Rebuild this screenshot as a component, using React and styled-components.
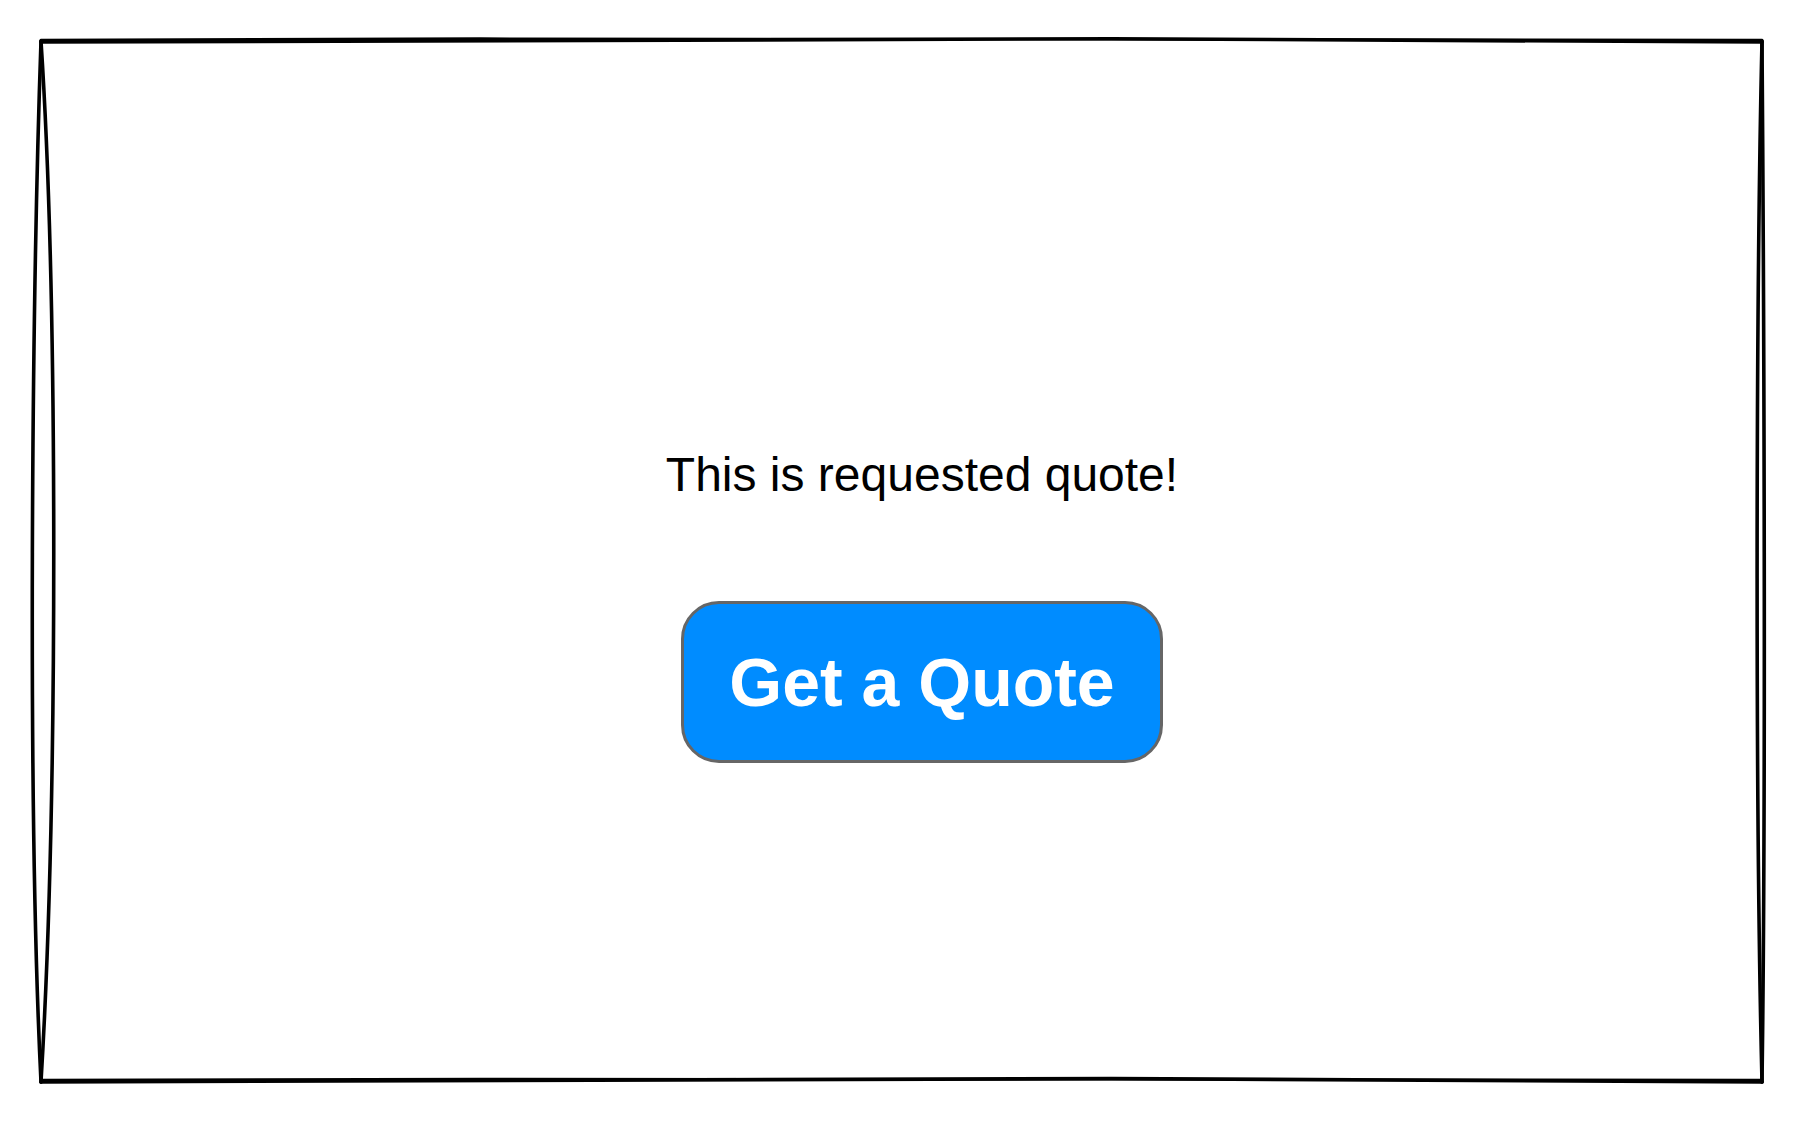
import React from "react";
import styled, { createGlobalStyle } from "styled-components";

const GlobalStyle = createGlobalStyle`
  html, body {
    margin: 0;
    padding: 0;
    background: #ffffff;
  }
  body {
    font-family: "Liberation Sans", Arial, Helvetica, sans-serif;
    color: #000000;
  }
`;

const Page = styled.div`
  position: relative;
  width: 1804px;
  height: 1124px;
  overflow: hidden;
  background: #ffffff;
`;

const SketchFrame = styled.svg`
  position: absolute;
  inset: 0;
  width: 100%;
  height: 100%;
  pointer-events: none;
`;

const Stage = styled.main`
  display: flex;
  flex-direction: column;
  align-items: center;
  padding-top: 447px;
  padding-left: 40px;
  gap: 98px;
`;

const Message = styled.p`
  margin: 0;
  font-family: "Liberation Sans", Arial, Helvetica, sans-serif;
  font-size: 48px;
  line-height: 56px;
  color: #000000;
`;

const QuoteButton = styled.button`
  display: flex;
  align-items: center;
  justify-content: center;
  box-sizing: border-box;
  width: 482px;
  height: 162px;
  padding: 0;
  border: 3px solid #666666;
  border-radius: 38px;
  background: #008cff;
  color: #ffffff;
  font-family: "Liberation Sans", Arial, Helvetica, sans-serif;
  font-weight: 700;
  font-size: 68px;
  line-height: 1;
  cursor: pointer;
`;

function Frame() {
  return (
    <SketchFrame viewBox="0 0 1804 1124" aria-hidden="true">
      <g fill="none" stroke="#000" strokeWidth="3.6" strokeLinecap="round" strokeLinejoin="round">
        {/* top */}
        <path d="M41 42 C 500 38, 1200 37, 1762 42" />
        <path d="M41 40 C 600 37, 1100 39, 1762 40" strokeWidth="2.4" />
        {/* bottom */}
        <path d="M41 1082 C 500 1077, 1200 1077, 1762 1082" />
        <path d="M41 1080 C 600 1078, 1100 1079, 1762 1080" strokeWidth="2.4" />
        {/* left, outer and inner */}
        <path d="M41 41 C 32 300, 27 800, 41 1082" />
        <path d="M41 41 C 58 300, 58 800, 41 1082" />
        {/* right, two close strokes */}
        <path d="M1762 41 C 1756 300, 1755 800, 1762 1082" />
        <path d="M1762 41 C 1764 300, 1766 800, 1762 1082" />
      </g>
    </SketchFrame>
  );
}

export default function App() {
  return (
    <>
      <GlobalStyle />
      <Page>
        <Frame />
        <Stage>
          <Message>This is requested quote!</Message>
          <QuoteButton type="button">Get a Quote</QuoteButton>
        </Stage>
      </Page>
    </>
  );
}
